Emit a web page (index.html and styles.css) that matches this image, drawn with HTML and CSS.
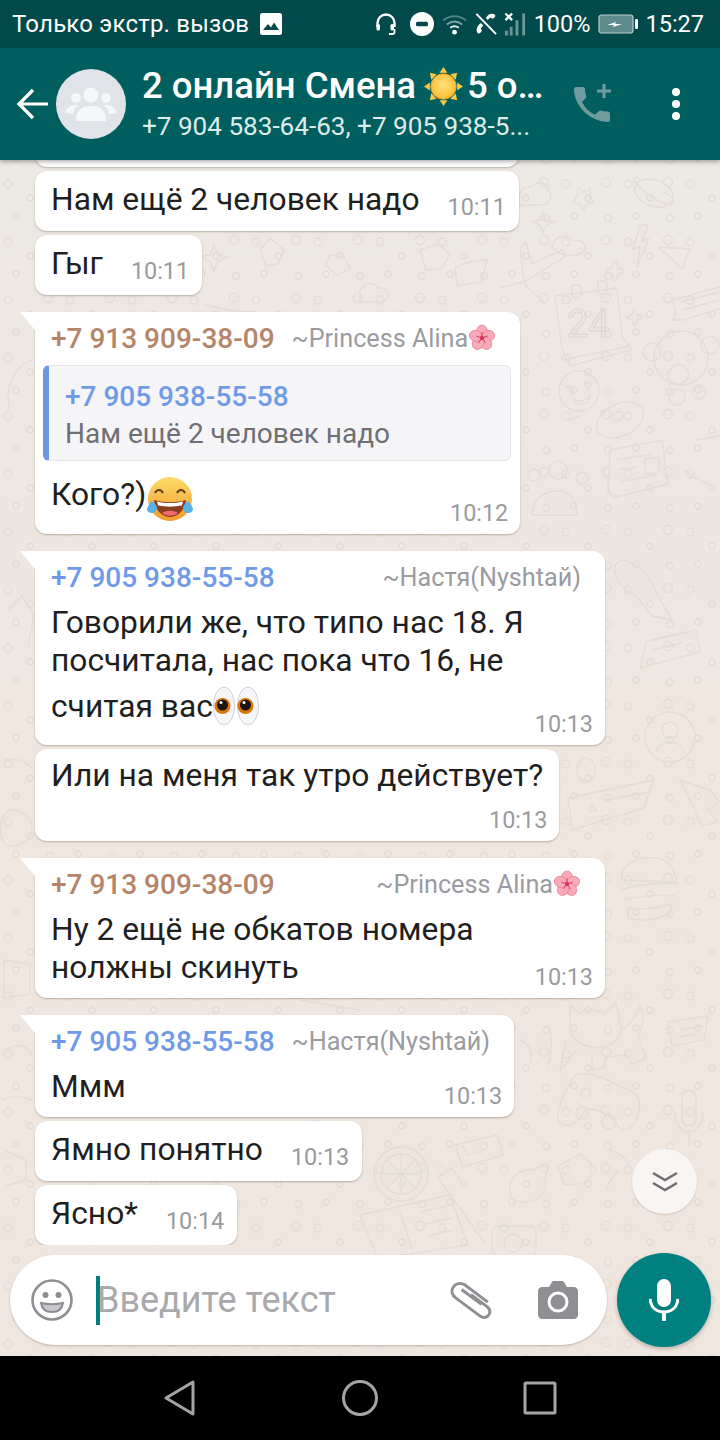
FILE: index.html
```html
<!DOCTYPE html>
<html lang="ru">
<head>
  <meta charset="UTF-8" />
  <title>2 онлайн Смена</title>
  <link rel="stylesheet" href="styles.css">
</head>
<body>
  <svg width="0" height="0" class="defs">
    <defs>
      <radialGradient id="sunFill" cx="50%" cy="45%" r="55%">
        <stop offset="0" stop-color="#ffe27a"/><stop offset="1" stop-color="#fbbc34"/>
      </radialGradient>
      <linearGradient id="laughFill" x1="0" y1="0" x2="0" y2="1">
        <stop offset="0" stop-color="#fddc6a"/><stop offset="1" stop-color="#f39a2e"/>
      </linearGradient>
      <symbol id="blossom" viewBox="0 0 28 28">
        <g fill="#f9a9b8" stroke="#ee8299" stroke-width=".8">
          <ellipse cx="14" cy="7.5" rx="5.5" ry="6.5"/>
          <ellipse cx="14" cy="7.5" rx="5.5" ry="6.5" transform="rotate(72 14 14)"/>
          <ellipse cx="14" cy="7.5" rx="5.5" ry="6.5" transform="rotate(144 14 14)"/>
          <ellipse cx="14" cy="7.5" rx="5.5" ry="6.5" transform="rotate(216 14 14)"/>
          <ellipse cx="14" cy="7.5" rx="5.5" ry="6.5" transform="rotate(288 14 14)"/>
        </g>
        <circle cx="14" cy="14" r="2.2" fill="#d8355f"/>
        <path d="M14 14V8M14 14l5.700-1.900M14 14l3.500 4.900M14 14l-3.500 4.900M14 14L8.300 12.100" stroke="#d8355f" stroke-width=".9"/>
      </symbol>
    </defs>
  </svg>

  <div class="status">
    <span class="status-text">Только экстр. вызов</span>
    <svg class="ic-image" width="24" height="24" viewBox="0 0 24 24"><rect x="1" y="1" width="22" height="22" rx="2.500" fill="#fff"/><path d="M4 18l5-6 3 3.500 3-5 5 7.500z" fill="#02494b"/></svg>
    <div class="status-right">
      <svg class="ic-headset" width="22" height="24" viewBox="0 0 22 24" fill="none" stroke="#fff" stroke-width="2.400"><path d="M2.500 15v-4a8.500 8.500 0 0 1 17 0v4"/><rect x="1.500" y="12" width="3.500" height="6.500" rx="1.500" fill="#fff" stroke="none"/><rect x="15.500" y="12" width="3.500" height="6.500" rx="1.500" fill="#fff" stroke="none"/><path d="M19.500 17v3a2 2 0 0 1-2 2H14" stroke-width="1.800"/></svg>
      <svg class="ic-dnd" width="24" height="24" viewBox="0 0 24 24"><circle cx="12" cy="12" r="12" fill="#fff"/><rect x="6" y="9.800" width="12" height="4.400" rx="1.500" fill="#02494b"/></svg>
      <svg class="ic-wifi" width="25" height="22" viewBox="0 0 26 22" fill="none" stroke-width="2"><path d="M1 7.500c7-6 17-6 24 0" stroke="#4f8283"/><path d="M5 11.500c5-4 11-4 16 0" stroke="#7aa0a0"/><path d="M8.500 15c3-2.200 6-2.200 9 0" stroke="#dfe9e9"/><circle cx="13" cy="19.500" r="2.500" fill="#fff" stroke="none"/></svg>
      <svg class="ic-calloff" width="22" height="24" viewBox="0 0 24 24"><path d="M15 1.500c2-1 5-1 6.500 0 1 .8.600 2.500-.2 3.300l-2 1.500-2.500-1.300-3 2.600-2-2.300zM6.500 11l2.500 2.600-2.700 3.200 1.300 2.600-1.700 2.200c-.9.800-2.500 1-3.300 0C1 19.500 1.500 14.500 6.500 11z" fill="#fff"/><path d="M1.500 1l21.500 22" stroke="#fff" stroke-width="2.200"/></svg>
      <svg class="ic-signal" width="23" height="24" viewBox="0 0 24 24"><path d="M1.500 1l7 7M8.500 1l-7 7" stroke="#fff" stroke-width="2.400"/><g fill="#6a9495"><rect x="1" y="19" width="3" height="5"/><rect x="6" y="15" width="3" height="9"/><rect x="12" y="8" width="3" height="16"/><rect x="19" y="1" width="3" height="23"/></g></svg>
      <span class="status-pct">100%</span>
      <svg class="ic-battery" width="40" height="20" viewBox="0 0 40 20"><rect x="1" y="1" width="34" height="18" rx="2.500" fill="#5f8b8c" stroke="#b8cccc" stroke-width="1.200"/><rect x="37" y="5" width="3" height="10" rx="1" fill="#fff"/><path d="M9 11l9-3-1 2h7l-9 3 1-2z" fill="#fff"/></svg>
      <span class="status-time">15:27</span>
    </div>
  </div>

  <header class="appbar">
    <svg class="back" width="34" height="32" viewBox="0 0 34 32" fill="none" stroke="#fff" stroke-width="3.200"><path d="M32 16H3M17 2L3 16l14 14"/></svg>
    <div class="avatar">
      <svg width="52" height="34" viewBox="0 0 52 34" fill="#f6f7f9"><circle cx="26" cy="8" r="7.500"/><circle cx="11" cy="11" r="4.800"/><circle cx="41" cy="11" r="4.800"/><path d="M11 34c0-11 6-15 15-15s15 4 15 15z"/><path d="M0 26c2-5 5-8 11-8l3 .5C10 20 8.500 23 8 27zM52 26c-2-5-5-8-11-8l-3 .5C42 20 43.500 23 44 27z"/></svg>
    </div>
    <div class="titles">
      <div class="title"><span>2 онлайн Смена</span><svg class="emoji-sun" width="39" height="39" viewBox="0 0 40 40"><g fill="#f7c948"><path d="M20 0l4 6h-8zM20 40l-4-6h8zM0 20l6-4v8zM40 20l-6 4v-8zM6 6l7 1.500L7.500 13zM34 6l-1.500 7L27 7.500zM6 34l1.500-7 5.500 5.500zM34 34l-7-1.500 5.500-5.500z"/></g><circle cx="20" cy="20" r="13" fill="url(#sunFill)" stroke="#f0a020" stroke-width="1"/></svg><span>5 о…</span></div>
      <div class="subtitle">+7 904 583-64-63, +7 905 938-5...</div>
    </div>
    <svg class="addcall" width="42" height="42" viewBox="0 0 42 42"><path d="M37 39C17 39 2 22 2 6c0-1 1-2 2-2h7c1 0 2 1 2 2 0 2.500.5 5 1.300 7 .2.700 0 1.500-.5 2l-3.800 4c2.800 5.500 7.300 10 13 12.800l4-3.800c.5-.5 1.300-.7 2-.5 2 .7 4.500 1.100 7 1.100 1 0 2 1 2 2V37c0 1-1 2-2 2z" fill="#6f9c9e"/><path d="M32 1v14M25 8h14" stroke="#6f9c9e" stroke-width="3.200"/></svg>
    <div class="menu"><span></span><span></span><span></span></div>
  </header>

  <main class="chat">
    <svg class="doodles" width="720" height="1196" viewBox="0 160 720 1196" fill="none" stroke="#e4ddd6" stroke-width="1.400">
      <defs>
        <pattern id="dots" width="62" height="58" patternUnits="userSpaceOnUse">
          <circle cx="8" cy="10" r="4"/><circle cx="30" cy="24" r="3"/><circle cx="48" cy="8" r="4.500"/><circle cx="16" cy="42" r="3"/><circle cx="50" cy="44" r="3.500"/>
        </pattern>
      </defs>
      <rect x="0" y="160" width="720" height="1196" fill="url(#dots)" stroke="none"/>
      <!-- top right -->
      <path d="M520 205c-4-12 4-20 12-18 6-8 16-4 16 4 6 2 2 14-6 14z"/>
      <ellipse cx="654" cy="193" rx="20" ry="13" transform="rotate(20 654 193)"/>
      <path d="M638 178c-8-2-4 6 10 16s26 14 26 6c-1-3-6-6-10-8"/>
      <path d="M552 245c4-10 16-12 22-4 9-3 14 6 8 12-8 4-26 4-30-8z"/>
      <path d="M640 225l-7 24 7-2-3 20 12-28-7 2 6-16z"/>
      <path d="M658 247l32 2-8 20-10-10z"/>
      <path d="M520 248l4 34 42-26-4-6-30 14-6-22zM522 282l-22 6M524 284l22 20"/>
      <path d="M555 296l62-8 5 48 10 14-62 16-8-18z"/>
      <path d="M562 360l68-14"/>
      <rect x="572" y="285" width="9" height="13" rx="3"/><rect x="598" y="281" width="9" height="13" rx="3"/>
      <path d="M673 300l50-14v22l-40 12-10 0 3-8z"/>
      <path d="M681 302l38-10M683 310l36-10"/>
      <circle cx="681" cy="358" r="27"/><circle cx="652" cy="352" r="9"/><circle cx="710" cy="345" r="9"/>
      <path d="M668 372c6-8 12-10 18-4 6 6 2 14-6 16-8 0-14-4-12-12z"/>
      <circle cx="677" cy="397" r="8"/><circle cx="699" cy="392" r="7"/>
      <circle cx="579" cy="391" r="20"/>
      <path d="M566 386l8 2-2 6zM584 382l8 2-4 6zM574 400c6 2 12 0 16-4-1 8-12 12-16 4z"/>
      <ellipse cx="620" cy="420" rx="25" ry="16" transform="rotate(-25 620 420)"/>
      <ellipse cx="618" cy="416" rx="6" ry="4" transform="rotate(-25 618 416)"/>
      <path d="M610 450l52-10 6 44-54 14-6-6z"/>
      <path d="M616 460l38-6M618 470l18-3M620 482l36-7M603 468l8 28 10 0"/>
      <rect x="645" y="458" width="14" height="16" rx="2"/>
      <circle cx="558" cy="470" r="9"/><circle cx="534" cy="475" r="6"/><circle cx="582" cy="478" r="6"/>
      <path d="M532 515c0-14 10-24 25-24s20 12 20 24z"/>
      <path d="M696 440l24-4M684 470c8 6 16 12 24 14"/>
      <path d="M569 420l10-4"/>
      <text x="567" y="337" font-family="Roboto, sans-serif" font-size="38" stroke="#dfd8d0" stroke-width="1.200">24</text>
      <path d="M612 268c2-10 5-10 6 0 8 2 8 4 0 6-1 9-5 9-6 0-8-2-8-4 0-6zM632 315c2-8 3-8 5 0 7 2 7 3 0 5-2 8-3 8-5 0-7-2-7-3 0-5z"/>
      <path d="M540 220l3-8 3 8 8 2-8 3-3 8-3-8-8-3zM578 188l6 4 6-4 0 8 4 6-7 2-3 6-4-6-7-2 4-6z"/>
      <!-- guitar, profile, burger -->
      <path d="M620 560c14 0 30 14 38 36l14 24-20-4-16-20c-18-8-28-28-16-36z"/>
      <path d="M640 668l6-26 50-12 4 22z"/>
      <path d="M650 640l36-8M652 650l30-7"/>
      <circle cx="670" cy="737" r="25"/><circle cx="670" cy="730" r="8"/>
      <path d="M656 752c2-8 8-10 14-10s12 2 14 10"/>
      <path d="M568 798l86-18-10 28-72 22z"/>
      <path d="M590 808l2-4 4 6-6 2zM606 800l44-8"/>
      <path d="M622 880c-2-12 8-20 24-22 16-2 30 6 30 24zM620 890c20-6 40-8 58-6M624 900c16-4 36-6 52-4"/>
      <path d="M628 908c14 2 30 0 44-4l-2 10c-14 6-30 8-42 4z"/>
      <ellipse cx="586" cy="770" rx="9" ry="12"/>
      <path d="M680 780l30 10 10 12-12 8 10 12-16 4z"/>
      <!-- lower right -->
      <path d="M570 1005l10 8c8-4 16-4 24 0l12-10 4 20c4 14-6 22-18 24-14 2-30-4-32-18z"/>
      <path d="M620 1030c10-4 16-14 20-24 6 10 2 22-2 30l8 22-14 6-6-10-20 4-2 10-12 2 0-16"/>
      <path d="M550 1030c2 12 2 24-2 36M566 1040l-6 30M576 1050l-16 22M520 1040c10 4 14 14 10 24"/>
      <path d="M668 1022l40-6-4 24-32 6z"/>
      <path d="M680 1030l22-4M680 1037l16-3"/>
      <path d="M575 1075c10-4 20 0 30 4l30 14c8 10 4 22-2 32-8 8-14 6-18-4-8-8-18-12-28-12-8 10-14 18-24 16-10-4-4-26 12-50z"/>
      <path d="M582 1090c6-4 10 0 8 6-4 4-10 2-8-6z"/>
      <circle cx="582" cy="1113" r="6"/><circle cx="609" cy="1122" r="7"/>
      <rect x="682" y="1090" width="14" height="36" rx="7"/>
      <path d="M675 1112c0 14 8 20 14 20s14-6 14-20M689 1132v14"/>
      <circle cx="401" cy="1174" r="27"/><circle cx="401" cy="1174" r="20"/>
      <path d="M401 1154v40M381 1174h40M387 1160l28 28M415 1160l-28 28"/>
      <path d="M455 1145l42-10 6 20-40 12zM462 1145l6 10 14-4"/>
      <path d="M510 1188c0-14 14-20 24-18 4-4 10-6 14-2-2 4 0 8-4 10 6 14-8 26-22 24-12 0-12-8-12-14z"/>
      <path d="M558 1166l22-12 12 10-2 14c-6 6-18 8-26 6zM590 1164c6 0 8 8 2 10"/>
      <path d="M608 1150c10 2 18 8 20 14M618 1170c-6 8-10 14-12 20M650 1178c4-6 12-4 10 4l-6 22c-6 4-10-4-4-26z"/>
      <path d="M360 1215l90-20 18 50-90 14zM400 1210l12 40M420 1212l28-6M424 1224l28-6M428 1236l26-6"/>
      <rect x="492" y="1226" width="44" height="30" rx="6"/><circle cx="513" cy="1243" r="9"/>
      <path d="M438 1178l46 64M438 1178l14-10 10 16"/>
      <!-- mid strip and left edge -->
      <path d="M210 255l4-10 4 10 10 2-10 4-4 10-4-10-10-4zM360 290c6-8 14-8 18-2 8-2 14 8 6 14h-24zM455 268c10-6 20-8 32-8l-6 22-24 4zM205 305c20 4 34 8 50 6"/>
      <path d="M260 250l10-12 14 12-6 14-12 2zM330 255l14 2 6 12-14 6-10-10zM420 250l18-6 12 10-8 14-16 2z"/>
      <path d="M10 410c-6-20 4-44 22-50M8 610l14-14 12 20-6 30M4 760c10-2 20 0 28 8M10 810c14 0 22 8 22 18s-10 18-22 18-14-30 0-36M4 960l26 4 0 30-26 4z"/>
      <path d="M2 1100c12-6 20-2 30 0M4 1150l22 10v20l-20 6M6 1050c10-8 24-4 26 6"/>
      <path d="M260 1130l60-10M280 1180l60-10M240 1200l-6 40M300 1000l60 10"/>
    </svg>

    <div class="messages">
      <div class="bubble single">
        <span class="text">Нам ещё 2 человек надо</span>
        <span class="time">10:11</span>
      </div>
      <div class="bubble single">
        <span class="text">Нам ещё 2 человек надо</span>
        <span class="time">10:11</span>
      </div>
      <div class="bubble single">
        <span class="text">Гыг</span>
        <span class="time">10:11</span>
      </div>

      <div class="bubble first">
        <div class="sender">
          <span class="name brown">+7 913 909-38-09</span>
          <span class="alias">~Princess Alina<svg class="emoji-flower" width="28" height="28"><use href="#blossom"/></svg></span>
        </div>
        <div class="quote">
          <div class="name blue">+7 905 938-55-58</div>
          <div class="quote-text">Нам ещё 2 человек надо</div>
        </div>
        <div class="line">
          <span class="text">Кого?)<svg class="emoji-laugh" width="48" height="46" viewBox="0 0 48 46"><circle cx="24" cy="23" r="22" fill="url(#laughFill)"/><path d="M9 17c2-4 6-4 8 0M31 17c2-4 6-4 8 0" fill="none" stroke="#5d3a1a" stroke-width="2"/><path d="M8 24c10 3 22 3 32 0-1 10-8 17-16 17S9 34 8 24z" fill="#8a3d1f"/><path d="M11 25.500c8 2 18 2 26 0l-1 4c-8 1.500-16 1.500-24 0z" fill="#fff"/><path d="M16 37c5-3 11-3 16 0-5 3.500-11 3.500-16 0z" fill="#f06b73"/><path d="M1 33c1-4 4-7 5-8 2 2 5 4 5 7 0 3-3 5-5 5s-5-1-5-4zM47 33c-1-4-4-7-5-8-2 2-5 4-5 7 0 3 3 5 5 5s5-1 5-4z" fill="#5ab0e8"/></svg></span>
          <span class="time">10:12</span>
        </div>
      </div>

      <div class="bubble first wide">
        <div class="sender">
          <span class="name blue">+7 905 938-55-58</span>
          <span class="alias">~Настя(Nyshtай)</span>
        </div>
        <div class="line">
          <span class="text">Говорили же, что типо нас 18. Я<br>посчитала, нас пока что 16, не<br><span class="eyes-line">считая вас<svg class="emoji-eyes" width="46" height="40" viewBox="0 0 46 40"><g fill="#f7f7fa" stroke="#cfcfd6"><ellipse cx="11" cy="20" rx="10.500" ry="19"/><ellipse cx="35" cy="20" rx="10.500" ry="19"/></g><circle cx="9.500" cy="20" r="8" fill="#d9780f"/><circle cx="32.500" cy="20" r="8" fill="#d9780f"/><circle cx="9.500" cy="19" r="5.500" fill="#1d1410"/><circle cx="32.500" cy="19" r="5.500" fill="#1d1410"/><circle cx="8" cy="16.500" r="1.500" fill="#fff"/><circle cx="31" cy="16.500" r="1.500" fill="#fff"/></svg></span></span>
          <span class="time">10:13</span>
        </div>
      </div>
      <div class="bubble stack">
        <span class="text">Или на меня так утро действует?</span>
        <span class="time">10:13</span>
      </div>

      <div class="bubble first wide">
        <div class="sender">
          <span class="name brown">+7 913 909-38-09</span>
          <span class="alias">~Princess Alina<svg class="emoji-flower" width="28" height="28"><use href="#blossom"/></svg></span>
        </div>
        <div class="line">
          <span class="text">Ну 2 ещё не обкатов номера<br>нолжны скинуть</span>
          <span class="time">10:13</span>
        </div>
      </div>

      <div class="bubble first">
        <div class="sender">
          <span class="name blue">+7 905 938-55-58</span>
          <span class="alias">~Настя(Nyshtай)</span>
        </div>
        <div class="line">
          <span class="text">Ммм</span>
          <span class="time">10:13</span>
        </div>
      </div>
      <div class="bubble single">
        <span class="text">Ямно понятно</span>
        <span class="time">10:13</span>
      </div>
      <div class="bubble single">
        <span class="text">Ясно*</span>
        <span class="time">10:14</span>
      </div>
    </div>

    <button class="scroll-down">
      <svg width="28" height="24" viewBox="0 0 28 24" fill="none" stroke="#6f6f73" stroke-width="2.600"><path d="M2 3l12 7 12-7M2 13l12 7 12-7"/></svg>
    </button>

    <div class="composer">
      <div class="input">
        <svg class="smile" width="42" height="42" viewBox="0 0 42 42" fill="none" stroke="#8e8e93" stroke-width="2.600"><circle cx="21" cy="21" r="19.500"/><circle cx="14.500" cy="16" r="3" fill="#8e8e93" stroke="none"/><circle cx="27.500" cy="16" r="3" fill="#8e8e93" stroke="none"/><path d="M10 24c7 1.500 15 1.500 22 0-1 6-5.500 9-11 9s-10-3-11-9z" fill="#c9c9cd" stroke="#8e8e93" stroke-width="2"/></svg>
        <span class="caret"></span>
        <span class="placeholder">Введите текст</span>
        <svg class="clip" width="44" height="40" viewBox="0 0 40 38" fill="none" stroke="#8e8e93" stroke-width="2.800"><path d="M20 14l15 11c3 2.500 3.500 5.500 2 8s-5 3.500-8 1.500L5.500 17C2 14.500 1 10.500 3 7s7-5 11-2.500L36 21"/><path d="M11 9l19 14"/></svg>
        <svg class="camera" width="40" height="38" viewBox="0 0 40 38"><path d="M4 6h7l3-5c.5-.7 1-1 2-1h8c1 0 1.500.3 2 1l3 5h7c2 0 4 2 4 4v24c0 2-2 4-4 4H4c-2 0-4-2-4-4V10c0-2 2-4 4-4z" fill="#8e8e93"/><circle cx="20" cy="21" r="9" fill="#8e8e93" stroke="#fff" stroke-width="3"/></svg>
      </div>
      <button class="mic">
        <svg width="30" height="42" viewBox="0 0 30 42"><rect x="8" y="0" width="14" height="28" rx="7" fill="#fff"/><path d="M1 20c1 9 7 13 14 13s13-4 14-13" fill="none" stroke="#fff" stroke-width="3"/><rect x="13" y="32" width="4" height="10" fill="#fff"/></svg>
      </button>
    </div>
  </main>

  <nav class="navbar">
    <svg width="32" height="36" viewBox="0 0 32 36" fill="none" stroke="#a5a5a5" stroke-width="3" stroke-linejoin="round"><path d="M29 2L2 18l27 16z"/></svg>
    <svg width="36" height="36" viewBox="0 0 36 36" fill="none" stroke="#a5a5a5" stroke-width="3"><circle cx="18" cy="18" r="16.500"/></svg>
    <svg width="34" height="34" viewBox="0 0 34 34" fill="none" stroke="#a5a5a5" stroke-width="3" stroke-linejoin="round"><rect x="2" y="2" width="30" height="30" rx="1"/></svg>
  </nav>
</body>
</html>
```

FILE: styles.css
```css
* {
  box-sizing: border-box;
}

body {
  margin: 0;
  width: 720px;
  height: 1440px;
  display: flex;
  flex-direction: column;
  overflow: hidden;
  font-family: Roboto, "Noto Sans", sans-serif;
  color: #1f1f1f;
  background: #000;
}

.defs {
  position: absolute;
}

/* status bar */
.status {
  height: 48px;
  flex: none;
  display: flex;
  align-items: center;
  padding: 0 16px 0 12px;
  background: #02494b;
  color: #fff;
  font-size: 24px;
}

.status-text {
  letter-spacing: .2px;
}

.ic-image {
  margin-left: 10px;
}

.status-right {
  margin-left: auto;
  display: flex;
  align-items: center;
}

.status-pct,
.status-time {
  font-size: 23.5px;
}

.ic-dnd { margin-left: 13px; }
.ic-wifi { margin-left: 8px; }
.ic-calloff { margin-left: 8px; }
.ic-signal { margin-left: 7px; }
.status-pct { margin-left: 7px; }
.ic-battery { margin-left: 8px; }
.status-time { margin-left: 7px; }

/* app bar */
.appbar {
  height: 112px;
  flex: none;
  display: flex;
  align-items: center;
  position: relative;
  z-index: 2;
  padding-left: 16px;
  background: #005e5f;
  color: #fff;
  box-shadow: 0 2px 4px rgba(0, 0, 0, .3);
}

.back {
  flex: none;
}

.avatar {
  width: 70px;
  height: 70px;
  flex: none;
  margin-left: 6px;
  border-radius: 50%;
  background: #e0e4e9;
  display: flex;
  align-items: center;
  justify-content: center;
}

.titles {
  width: 425px;
  margin-left: 16px;
  padding-bottom: 3px;
}

.title {
  font-size: 36.5px;
  font-weight: 500;
  line-height: 44px;
  white-space: nowrap;
  display: flex;
  align-items: center;
}

.emoji-sun {
  flex: none;
  margin: 0 4px 0 8px;
}

.subtitle {
  margin-top: 3px;
  font-size: 26.1px;
  line-height: 30px;
  color: #dcebeb;
  white-space: nowrap;
}

.addcall {
  flex: none;
  margin-left: 5px;
}

.menu {
  margin-left: 58px;
  display: flex;
  flex-direction: column;
  gap: 4px;
}

.menu span {
  width: 8px;
  height: 8px;
  border-radius: 50%;
  background: #fff;
}

/* chat */
.chat {
  flex: 1;
  min-height: 0;
  position: relative;
  overflow: hidden;
  display: flex;
  flex-direction: column;
  background: linear-gradient(#ece8e3, #efe6df 55%, #efe6df);
}

.doodles {
  position: absolute;
  left: 0;
  top: 0;
}

.messages {
  flex: 1;
  min-height: 0;
  position: relative;
  display: flex;
  flex-direction: column;
  justify-content: flex-end;
  align-items: flex-start;
  padding-left: 35px;
  overflow: hidden;
}

.bubble {
  flex: none;
  position: relative;
  width: fit-content;
  margin-top: 4px;
  padding: 10px 12px 7px 16px;
  background: #fff;
  border-radius: 12px;
  box-shadow: 0 1px 2px rgba(90, 70, 50, .35);
}

.bubble.first {
  margin-top: 17px;
  border-top-left-radius: 0;
}

.bubble.first::before {
  content: "";
  position: absolute;
  left: -15px;
  top: 0;
  width: 15px;
  height: 18px;
  background: #fff;
  clip-path: polygon(0 0, 100% 0, 100% 100%);
}

.bubble.wide {
  width: 570px;
}

.bubble.single {
  display: flex;
  align-items: flex-end;
  gap: 28px;
  padding: 8px 13px 10px 16px;
}

.bubble.stack {
  display: flex;
  flex-direction: column;
  padding-top: 6px;
}

.bubble.stack .text {
  margin-right: 4px;
}

.bubble.stack .time {
  align-self: flex-end;
  margin-top: 9px;
}

.text {
  font-size: 31.75px;
  line-height: 38px;
  color: #1f1f1f;
}

.bubble.single .text,
.bubble.stack .text {
  line-height: 42px;
}

.time {
  flex: none;
  font-size: 23.4px;
  line-height: 28px;
  color: #9a9a9c;
}

.sender {
  display: flex;
  justify-content: space-between;
  align-items: center;
  gap: 17px;
  padding-right: 12px;
  height: 32px;
  white-space: nowrap;
}

.name {
  font-size: 28px;
  font-weight: 500;
}

.brown { color: #b5856a; }
.blue { color: #6f9ae8; }

.alias {
  display: flex;
  align-items: center;
  font-size: 25.2px;
  color: #9b9b9f;
}

.emoji-flower {
  flex: none;
}

.quote {
  margin: 11px -3px 0 -8px;
  height: 96px;
  padding: 13px 12px 0 16px;
  border: 1px solid #e6e6ec;
  border-left: 6px solid #6f95e3;
  border-radius: 6px;
  background: #f5f5f8;
}

.quote .name {
  line-height: 36px;
}

.quote-text {
  margin-top: 1px;
  font-size: 28px;
  line-height: 36px;
  color: #6f6f73;
}

.line {
  display: flex;
  justify-content: space-between;
  align-items: flex-end;
  margin-top: 11px;
}

.line .text {
  margin-bottom: 4px;
}

.bubble .quote + .line {
  margin-top: 15px;
}

.quote + .line .text {
  margin-bottom: 13px;
}

.emoji-laugh {
  vertical-align: -9px;
  margin: -8px 0;
}

.eyes-line {
  display: inline-block;
  height: 54px;
  line-height: 54px;
}

.emoji-eyes {
  vertical-align: -9px;
}

.scroll-down {
  position: absolute;
  left: 632px;
  top: 989px;
  width: 65px;
  height: 65px;
  padding: 0;
  border: 0;
  border-radius: 50%;
  background: #f8f5f3;
  box-shadow: 0 1px 2px rgba(0, 0, 0, .15);
  display: flex;
  align-items: center;
  justify-content: center;
}

.composer {
  flex: none;
  position: relative;
  display: flex;
  align-items: center;
  gap: 10px;
  padding: 8px 9px 9px 10px;
}

.input {
  flex: 1;
  height: 90px;
  border-radius: 45px;
  background: #fff;
  box-shadow: 0 1px 2px rgba(90, 70, 50, .3);
  display: flex;
  align-items: center;
  padding-left: 21px;
}

.smile {
  flex: none;
}

.caret {
  flex: none;
  width: 4px;
  height: 49px;
  margin-left: 23px;
  background: #00807a;
}

.placeholder {
  flex: 1;
  margin-left: -3px;
  font-size: 36px;
  color: #a9a9ac;
}

.clip {
  flex: none;
}

.camera {
  flex: none;
  margin: 0 29px 0 45px;
}

.mic {
  flex: none;
  width: 94px;
  height: 94px;
  padding: 0;
  border: 0;
  border-radius: 50%;
  background: #00807f;
  box-shadow: 0 2px 4px rgba(0, 0, 0, .25);
  display: flex;
  align-items: center;
  justify-content: center;
}

/* android nav */
.navbar {
  height: 84px;
  flex: none;
  display: flex;
  align-items: center;
  justify-content: space-between;
  padding: 0 163px 0 164px;
  background: #000;
}
```
